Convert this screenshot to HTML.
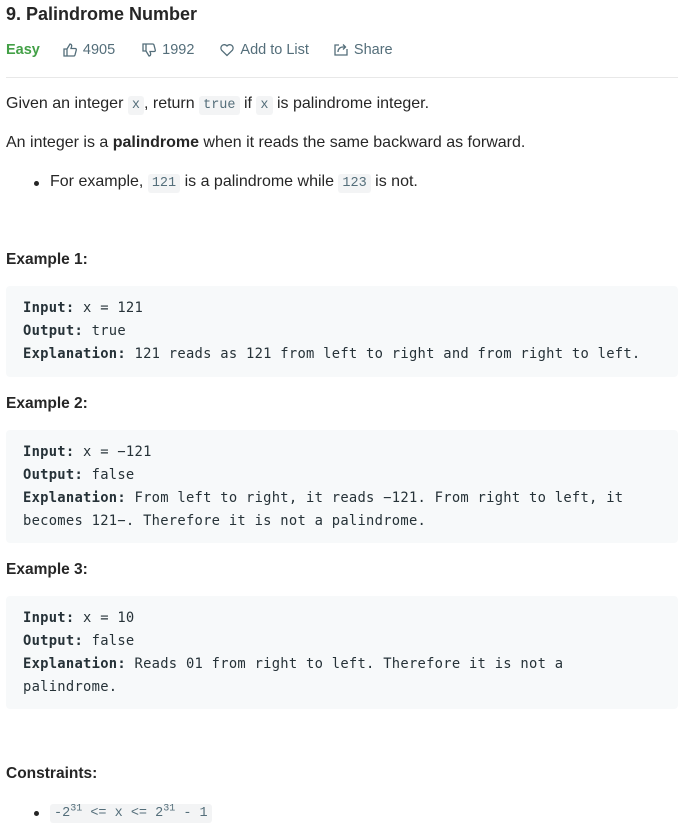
<!DOCTYPE html>
<html><head><style>
body{margin:0;background:#fff;width:691px;height:837px;overflow:hidden;font-family:"Liberation Sans",sans-serif;color:#262626;position:relative}
.a{position:absolute;white-space:nowrap}
h1{position:absolute;left:6px;top:4px;margin:0;font-size:18px;font-weight:600;color:#262626}
.meta{position:absolute;top:41px;left:6px;font-size:14.5px;color:#546e7a;display:flex;align-items:center;height:18px}
.meta span{display:inline-flex;align-items:center}
.meta svg{margin-right:5px}
.hr{position:absolute;left:6px;right:13px;top:77px;border-top:1px solid #e8e8e8}
p{margin:0}
.t{position:absolute;left:6px;font-size:16px}
code{font-family:"Liberation Mono",monospace;font-size:13.5px;background:#f3f4f5;color:#546e7a;padding:2px 4px;border-radius:3px}
.h{position:absolute;left:6px;font-size:15.5px;font-weight:700}
.pre{position:absolute;left:6px;width:672px;background:#f7f9fa;border-radius:4px;font-family:"DejaVu Sans Mono",monospace;font-size:13.8px;letter-spacing:0.27px;line-height:23px;padding:11px 17px;box-sizing:border-box;color:#263238;white-space:pre}
.pre b{font-weight:700}
.dot{position:absolute;width:5px;height:5px;border-radius:50%;background:#262626}
</style></head><body>
<h1>9. Palindrome Number</h1>
<div class="meta">
<span style="color:#43a047;font-weight:600;margin-right:22px">Easy</span>
<span style="margin-right:26px"><svg width="16" height="16" viewBox="0 0 16 16" fill="none" stroke="#546e7a" stroke-width="1.3"><path d="M2 7h3v7H2zM5 7l3-5c1 0 2 1 1.6 2.5L9 6.5h4.2c.8 0 1.3.7 1.1 1.4l-1.3 5c-.2.7-.7 1.1-1.4 1.1H5"/></svg>4905</span>
<span style="margin-right:25px"><svg width="16" height="16" viewBox="0 0 16 16" fill="none" stroke="#546e7a" stroke-width="1.3" style="transform:scaleY(-1)"><path d="M2 7h3v7H2zM5 7l3-5c1 0 2 1 1.6 2.5L9 6.5h4.2c.8 0 1.3.7 1.1 1.4l-1.3 5c-.2.7-.7 1.1-1.4 1.1H5"/></svg>1992</span>
<span style="margin-right:24px"><svg width="16" height="16" viewBox="0 0 16 16" fill="none" stroke="#546e7a" stroke-width="1.3"><path d="M8 13.5L2.6 8.2A3.2 3.2 0 0 1 8 4a3.2 3.2 0 0 1 5.4 4.2z"/></svg>Add to List</span>
<span><svg width="16" height="16" viewBox="0 0 16 16" fill="none" stroke="#546e7a" stroke-width="1.3"><path d="M6 3H2v10h12V7M5 10c0-3 2-5 5-5h2M10 2.5l2.5 2.5L10 7.5"/></svg>Share</span>
</div>
<div class="hr"></div>
<div class="a t" style="top:95px">Given an integer <code>x</code>, return <code>true</code> if <code>x</code> is palindrome integer.</div>
<div class="a t" style="top:134px">An integer is a <b>palindrome</b> when it reads the same backward as forward.</div>
<div class="dot" style="left:34px;top:181px"></div>
<div class="a t" style="left:50px;top:173px">For example, <code>121</code> is a palindrome while <code>123</code> is not.</div>
<div class="h a" style="top:251px">Example 1:</div>
<div class="pre" style="top:286px;height:91px"><b>Input:</b> x = 121
<b>Output:</b> true
<b>Explanation:</b> 121 reads as 121 from left to right and from right to left.</div>
<div class="h a" style="top:395px">Example 2:</div>
<div class="pre" style="top:430px;height:113px"><b>Input:</b> x = −121
<b>Output:</b> false
<b>Explanation:</b> From left to right, it reads −121. From right to left, it
becomes 121−. Therefore it is not a palindrome.</div>
<div class="h a" style="top:561px">Example 3:</div>
<div class="pre" style="top:596px;height:113px"><b>Input:</b> x = 10
<b>Output:</b> false
<b>Explanation:</b> Reads 01 from right to left. Therefore it is not a
palindrome.</div>
<div class="h a" style="top:765px">Constraints:</div>
<div class="dot" style="left:34px;top:811px"></div>
<div class="a t" style="left:50px;top:803px"><code>-2<sup style="font-size:10px">31</sup> &lt;= x &lt;= 2<sup style="font-size:10px">31</sup> - 1</code></div>
</body></html>
